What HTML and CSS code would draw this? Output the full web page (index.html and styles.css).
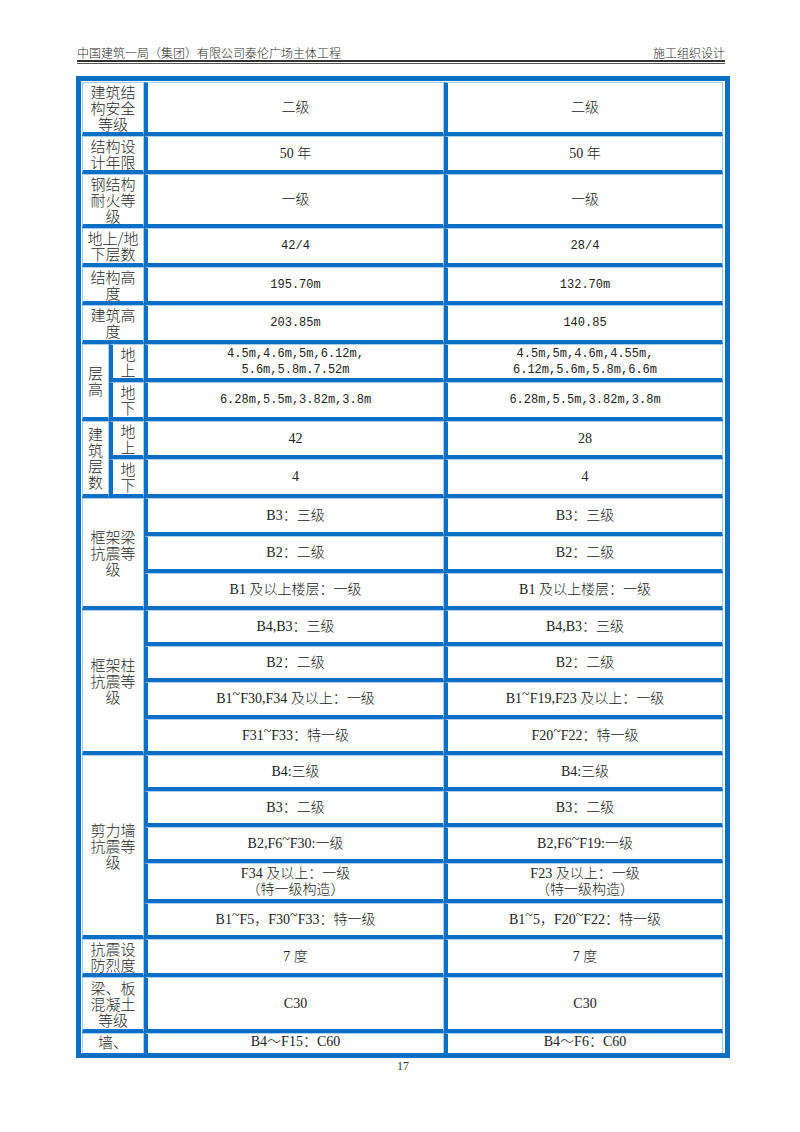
FILE: index.html
```html
<!DOCTYPE html>
<html lang="zh">
<head>
<meta charset="utf-8">
<title>施工组织设计</title>
<link rel="stylesheet" href="styles.css">
</head>
<body>
<div class="page">
  <div class="header">
    <span>中国建筑一局（集团）有限公司泰伦广场主体工程</span>
    <span>施工组织设计</span>
  </div>
  <div class="rule"></div>
  <div class="frame">
    <table>
      <colgroup>
        <col class="ca"><col class="cb"><col class="cc"><col class="cd">
      </colgroup>
      <tr class="h54"><td class="lbl first" colspan="2">建筑结构安全等级</td><td>二级</td><td>二级</td></tr>
      <tr class="h38"><td class="lbl first" colspan="2">结构设计年限</td><td>50 年</td><td>50 年</td></tr>
      <tr class="h54"><td class="lbl first" colspan="2">钢结构耐火等级</td><td>一级</td><td>一级</td></tr>
      <tr class="h39"><td class="lbl first" colspan="2">地上/地下层数</td><td class="m">42/4</td><td class="m">28/4</td></tr>
      <tr class="h38"><td class="lbl first" colspan="2">结构高度</td><td class="m">195.70m</td><td class="m">132.70m</td></tr>
      <tr class="h39"><td class="lbl first" colspan="2">建筑高度</td><td class="m">203.85m</td><td class="m">140.85</td></tr>
      <tr class="h38"><td class="lbl first narrow" rowspan="2">层高</td><td class="lbl sub">地上</td><td class="m">4.5m,4.6m,5m,6.12m,<br>5.6m,5.8m.7.52m</td><td class="m">4.5m,5m,4.6m,4.55m,<br>6.12m,5.6m,5.8m,6.6m</td></tr>
      <tr class="h39"><td class="lbl sub">地下</td><td class="m">6.28m,5.5m,3.82m,3.8m</td><td class="m">6.28m,5.5m,3.82m,3.8m</td></tr>
      <tr class="h38"><td class="lbl first narrow" rowspan="2">建筑层数</td><td class="lbl sub">地上</td><td>42</td><td>28</td></tr>
      <tr class="h39"><td class="lbl sub">地下</td><td>4</td><td>4</td></tr>
      <tr class="h38"><td class="lbl first" colspan="2" rowspan="3">框架梁抗震等级</td><td>B3：三级</td><td>B3：三级</td></tr>
      <tr class="h37"><td>B2：二级</td><td>B2：二级</td></tr>
      <tr class="h37"><td>B1 及以上楼层：一级</td><td>B1 及以上楼层：一级</td></tr>
      <tr class="h36"><td class="lbl first" colspan="2" rowspan="4">框架柱抗震等级</td><td>B4,B3：三级</td><td>B4,B3：三级</td></tr>
      <tr class="h36"><td>B2：二级</td><td>B2：二级</td></tr>
      <tr class="h37"><td>B1<span class="t">~</span>F30,F34 及以上：一级</td><td>B1<span class="t">~</span>F19,F23 及以上：一级</td></tr>
      <tr class="h36"><td>F31<span class="t">~</span>F33：特一级</td><td>F20<span class="t">~</span>F22：特一级</td></tr>
      <tr class="h36"><td class="lbl first" colspan="2" rowspan="5">剪力墙抗震等级</td><td>B4:三级</td><td>B4:三级</td></tr>
      <tr class="h36"><td>B3：二级</td><td>B3：二级</td></tr>
      <tr class="h36"><td>B2,F6<span class="t">~</span>F30:一级</td><td>B2,F6<span class="t">~</span>F19:一级</td></tr>
      <tr class="h40"><td>F34 及以上：一级<br>（特一级构造）</td><td>F23 及以上：一级<br>（特一级构造）</td></tr>
      <tr class="h36"><td>B1<span class="t">~</span>F5，F30<span class="t">~</span>F33：特一级</td><td>B1<span class="t">~</span>5，F20<span class="t">~</span>F22：特一级</td></tr>
      <tr class="h38"><td class="lbl first" colspan="2">抗震设防烈度</td><td>7 度</td><td>7 度</td></tr>
      <tr class="h56"><td class="lbl first" colspan="2">梁、板混凝土等级</td><td>C30</td><td>C30</td></tr>
      <tr class="last"><td class="lbl first" colspan="2">墙、</td><td>B4～F15：C60</td><td>B4～F6：C60</td></tr>
    </table>
  </div>
  <div class="pageno">17</div>
</div>
</body>
</html>
```
FILE: styles.css
```css
* {
  box-sizing: border-box;
}

body {
  margin: 0;
  background: #ffffff;
  font-family: "Liberation Serif", "Noto Sans CJK SC", serif;
  color: #222222;
}

.page {
  width: 800px;
  height: 1132px;
  padding: 46px 0 0 76px;
}

.header {
  width: 648px;
  margin-left: 1px;
  display: flex;
  justify-content: space-between;
  font-family: "Noto Sans CJK SC", sans-serif;
  font-size: 12px;
  line-height: 14px;
  font-weight: 300;
  color: #2a2a2a;
}

.rule {
  width: 648px;
  margin-left: 1px;
  height: 4px;
  border-top: 2px solid #333333;
  border-bottom: 1px solid #555555;
}

.frame {
  width: 654px;
  margin-top: 12px;
  border: 5px solid #0b6fc6;
  padding: 1px 2px 0 1px;
}

table {
  border-collapse: separate;
  border-spacing: 0;
  table-layout: fixed;
  width: 641px;
}

col.ca { width: 27px; }
col.cb { width: 35px; }
col.cc { width: 300px; }
col.cd { width: 279px; }

td {
  border-top: 1px solid #a9cdee;
  border-right: 1px solid #a9cdee;
  border-bottom: 4px solid #0b6fc6;
  border-left: 4px solid #0b6fc6;
  text-align: center;
  vertical-align: middle;
  padding: 0;
  font-size: 14px;
  line-height: 16px;
  font-weight: 300;
  color: #222222;
}

td.lbl {
  font-family: "Noto Sans CJK SC", sans-serif;
  font-size: 15px;
  line-height: 16px;
  padding: 0 4px;
  color: #2a2a2a;
}

td.first {
  border-left: 1px solid #a9cdee;
}

td.narrow {
  padding: 0;
}

td.sub {
  padding: 0 2px;
}

td.m {
  font-family: "Liberation Mono", "Noto Sans CJK SC", monospace;
  font-size: 12px;
  line-height: 16px;
  font-weight: 400;
  color: #222222;
}

.t {
  vertical-align: 4px;
  line-height: 0;
}

tr.h54 { height: 54px; }
tr.h56 { height: 56px; }
tr.h40 { height: 40px; }
tr.h39 { height: 39px; }
tr.h38 { height: 38px; }
tr.h37 { height: 37px; }
tr.h36 { height: 36px; }
tr.last { height: 20px; }

tr.last td {
  border-bottom: 0;
  vertical-align: top;
  padding-top: 0;
}

.pageno {
  width: 654px;
  margin-top: 1px;
  text-align: center;
  font-size: 12px;
  line-height: 14px;
  color: #333333;
}
```
